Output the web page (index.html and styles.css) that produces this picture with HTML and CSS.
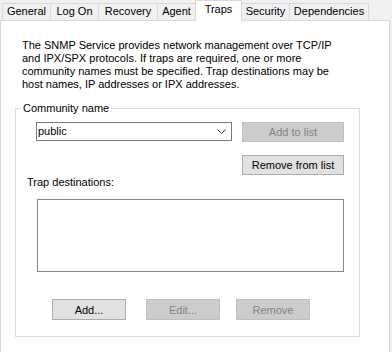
FILE: index.html
```html
<!DOCTYPE html>
<html>
<head>
<meta charset="utf-8">
<link rel="stylesheet" href="styles.css">
</head>
<body>
<div class="dialog">
  <div class="tabs">
    <div class="tab tab-general">General</div>
    <div class="tab tab-logon">Log On</div>
    <div class="tab tab-recovery">Recovery</div>
    <div class="tab tab-agent">Agent</div>
    <div class="tab tab-traps active">Traps</div>
    <div class="tab tab-security">Security</div>
    <div class="tab tab-deps">Dependencies</div>
  </div>
  <div class="panel">
    <p class="intro">The SNMP Service provides network management over TCP/IP<br>and IPX/SPX protocols. If traps are required, one or more<br>community names must be specified. Trap destinations may be<br>host names, IP addresses or IPX addresses.</p>
    <fieldset class="group">
      <legend class="group-title">Community name</legend>
      <div class="group-body">
        <div class="row">
          <div class="combo">
            <span class="combo-value">public</span>
            <svg class="chevron" width="9" height="5" viewBox="0 0 9 5"><polyline points="0.5,0.5 4.5,4.5 8.5,0.5" fill="none" stroke="#404040" stroke-width="1"/></svg>
          </div>
          <button class="btn btn-top disabled">Add to list</button>
        </div>
        <div class="row row-end">
          <button class="btn btn-top">Remove from list</button>
        </div>
        <div class="label">Trap destinations:</div>
        <div class="listbox"></div>
        <div class="actions">
          <button class="btn btn-bottom">Add...</button>
          <button class="btn btn-bottom btn-edit disabled">Edit...</button>
          <button class="btn btn-bottom disabled">Remove</button>
        </div>
      </div>
    </fieldset>
  </div>
</div>
</body>
</html>
```
FILE: styles.css
```css
* { box-sizing: border-box; }
html, body {
  margin: 0;
  padding: 0;
  width: 392px;
  height: 352px;
  overflow: hidden;
  background: #f0f0f0;
  font-family: "Liberation Sans", Arial, sans-serif;
  font-size: 11px;
  color: #000;
}
.dialog { width: 392px; }
.tabs {
  display: flex;
  align-items: flex-end;
  height: 20px;
  padding-left: 2px;
}
.tab {
  height: 17px;
  border-top: 1px solid #d9d9d9;
  border-left: 1px solid #d9d9d9;
  background: #f0f0f0;
  text-align: center;
  line-height: 15px;
  white-space: nowrap;
}
.tab-general { width: 48px; }
.tab-logon { width: 48px; }
.tab-recovery { width: 59px; }
.tab-agent { width: 38px; }
.tab-traps { width: 47px; }
.tab-security { width: 47px; border-left: 0; }
.tab-deps { width: 80px; border-right: 1px solid #d9d9d9; }
.tab.active {
  height: 21px;
  margin-bottom: -1px;
  background: #fff;
  border-right: 1px solid #d9d9d9;
  line-height: 17px;
  position: relative;
  z-index: 1;
}
.panel {
  width: 390px;
  height: 340px;
  background: #fff;
  border: 1px solid #d9d9d9;
  padding: 0 0 0 14px;
}
.intro {
  margin: 18px 0 0 7px;
  line-height: 13px;
}
.group {
  margin: 11px 0 0 0;
  width: 345px;
  border: 1px solid #dcdcdc;
  padding: 0;
  min-width: 0;
}
.group-title {
  margin-left: 5px;
  padding: 0 2px;
  line-height: 13px;
}
.group-body {
  padding: 7px 15px 16px 11px;
}
.row {
  display: flex;
  justify-content: space-between;
  align-items: flex-start;
  padding-left: 9px;
}
.row-end {
  justify-content: flex-end;
  margin-top: 13px;
}
.combo {
  width: 196px;
  height: 19px;
  border: 1px solid #7a7a7a;
  background: #fff;
  display: flex;
  align-items: center;
  justify-content: space-between;
  padding: 0 5px 0 1px;
}
.combo-value { line-height: 17px; }
.chevron { display: block; }
.btn {
  font: inherit;
  color: #000;
  background: #e1e1e1;
  border: 1px solid #adadad;
  border-radius: 0;
  padding: 0;
  margin: 0;
  text-align: center;
}
.btn.disabled {
  background: #cccccc;
  border-color: #bfbfbf;
  color: #838383;
}
.btn-top { width: 102px; height: 20px; }
.btn-bottom { width: 74px; height: 21px; }
.label {
  line-height: 13px;
  margin-top: 1px;
}
.listbox {
  margin: 10px 0 0 10px;
  width: 307px;
  height: 73px;
  border: 1px solid #828790;
  background: #fff;
}
.actions {
  display: flex;
  margin-top: 27px;
  padding-left: 25px;
}
.btn-edit { margin: 0 16px 0 20px; }
```
